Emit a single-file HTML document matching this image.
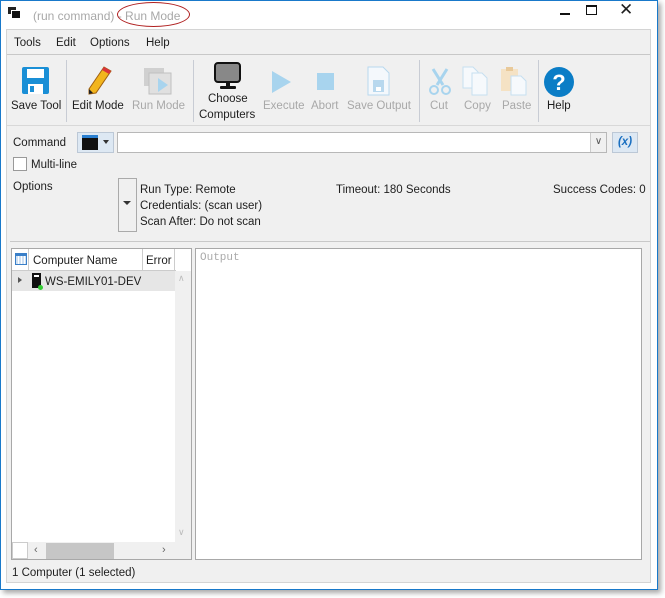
<!DOCTYPE html>
<html><head><style>
*{margin:0;padding:0;box-sizing:border-box}
body{width:665px;height:598px;background:#fff;font-family:"Liberation Sans",sans-serif;font-size:11.5px;color:#1e1e1e;position:relative;overflow:hidden}
.a{position:absolute}
.win{left:0;top:0;width:658px;height:590px;border:1px solid #1979ca;background:#fff;box-shadow:3px 3px 5px rgba(0,0,0,.35)}
.gray{color:#a8a8a8}
.tb{top:100px;font-size:11.5px;white-space:nowrap}
.sep{width:1px;background:#c8ccd4;top:60px;height:62px}
</style></head><body>
<div class="a win"></div>
<div class="a" style="left:8px;top:7px;width:8px;height:7px;background:#222"></div>
<div class="a" style="left:11px;top:10px;width:10px;height:9px;background:#111;border:1px solid #fff"></div>
<div class="a gray" style="left:33px;top:9px;font-size:12px">(run command) - Run Mode</div>
<div class="a" style="left:117px;top:2px;width:73px;height:25px;border:1.5px solid #b02020;border-radius:50%"></div>
<div class="a" style="left:560px;top:13px;width:10px;height:2px;background:#111"></div>
<div class="a" style="left:586px;top:5px;width:11px;height:10px;border:1px solid #111;border-top-width:2px"></div>
<div class="a" style="left:619px;top:0px;font-size:17px">✕</div>
<div class="a" style="left:6px;top:29px;width:645px;height:554px;background:#f0f0f0;border:1px solid #d4d4d4"></div>
<div class="a" style="left:14px;top:37px">Tools</div>
<div class="a" style="left:56px;top:37px">Edit</div>
<div class="a" style="left:90px;top:37px">Options</div>
<div class="a" style="left:146px;top:37px">Help</div>
<div class="a" style="left:7px;top:54px;width:643px;height:1px;background:#c8c8c8"></div>
<svg class="a" style="left:22px;top:67px" width="28" height="28"><rect x="0" y="0" width="27" height="27" rx="2" fill="#1a8fd6"/><rect x="5" y="2" width="17" height="9" fill="#fff"/><rect x="6" y="17" width="15" height="10" fill="#fff"/><rect x="8" y="19" width="4" height="6" fill="#1a8fd6"/></svg>
<div class="a tb" style="left:11px">Save Tool</div>
<div class="a sep" style="left:66px"></div>
<svg class="a" style="left:86px;top:65px" width="28" height="32"><polygon points="18,2 25,6 10,28 3,29 3,24" fill="#f2b51d" stroke="#a06010"/><polygon points="18,2 25,6 23,9 16,5" fill="#d9343a"/><polygon points="3,24 3,29 7,28" fill="#222"/></svg>
<div class="a tb" style="left:72px">Edit Mode</div>
<svg class="a" style="left:144px;top:68px" width="30" height="28"><rect x="0" y="0" width="20" height="18" fill="#d0d0d0"/><rect x="5" y="5" width="22" height="21" fill="#e0e0e0" stroke="#c0c0c0"/><polygon points="14,10 24,17 14,24" fill="#a8d4ee"/></svg>
<div class="a tb gray" style="left:132px">Run Mode</div>
<div class="a sep" style="left:193px"></div>
<svg class="a" style="left:214px;top:62px" width="28" height="28"><rect x="1" y="1" width="25" height="19" rx="3" fill="#888" stroke="#111" stroke-width="2"/><rect x="12" y="20" width="4" height="4" fill="#111"/><rect x="6" y="24" width="16" height="3" rx="1" fill="#111"/></svg>
<div class="a" style="left:208px;top:93px">Choose</div>
<div class="a" style="left:199px;top:109px">Computers</div>
<svg class="a" style="left:272px;top:71px" width="20" height="22"><polygon points="0,0 19,11 0,22" fill="#a8d4ee"/></svg>
<div class="a tb gray" style="left:263px">Execute</div>
<div class="a" style="left:317px;top:73px;width:17px;height:17px;background:#a8d4ee"></div>
<div class="a tb gray" style="left:311px">Abort</div>
<svg class="a" style="left:367px;top:66px" width="24" height="30"><path d="M1 1H16L22 7V29H1Z" fill="#f4f8fc" stroke="#b8d8ee"/><rect x="6" y="14" width="11" height="12" fill="#b8d8ee"/><rect x="9" y="21" width="5" height="4" fill="#fff"/></svg>
<div class="a tb gray" style="left:347px">Save Output</div>
<div class="a sep" style="left:419px"></div>
<svg class="a" style="left:428px;top:68px" width="24" height="28"><path d="M5 1L15 17M19 1L9 17" stroke="#a8d4ee" stroke-width="3"/><circle cx="6" cy="22" r="4" fill="none" stroke="#a8d4ee" stroke-width="2"/><circle cx="18" cy="22" r="4" fill="none" stroke="#a8d4ee" stroke-width="2"/></svg>
<div class="a tb gray" style="left:430px">Cut</div>
<svg class="a" style="left:462px;top:66px" width="30" height="30"><path d="M1 1H11L16 6V22H1Z" fill="#f6f9fc" stroke="#c6dff0"/><path d="M10 7H20L25 12V29H10Z" fill="#f6f9fc" stroke="#c6dff0"/></svg>
<div class="a tb gray" style="left:464px">Copy</div>
<svg class="a" style="left:500px;top:66px" width="30" height="30"><rect x="1" y="3" width="17" height="22" fill="#f5e2c4"/><rect x="6" y="1" width="7" height="4" fill="#e8c99a"/><path d="M11 10H21L26 15V29H11Z" fill="#f6f9fc" stroke="#c6dff0"/></svg>
<div class="a tb gray" style="left:502px">Paste</div>
<div class="a sep" style="left:538px"></div>
<svg class="a" style="left:543px;top:66px" width="32" height="32"><circle cx="16" cy="16" r="15" fill="#0b7dc6"/><text x="16" y="24" text-anchor="middle" font-family="Liberation Sans" font-weight="bold" font-size="22" fill="#fff">?</text></svg>
<div class="a tb" style="left:547px">Help</div>
<div class="a" style="left:7px;top:125px;width:643px;height:1px;background:#d8d8d8"></div>
<div class="a" style="left:13px;top:137px">Command</div>
<div class="a" style="left:77px;top:132px;width:37px;height:21px;background:#dde8f3;border:1px solid #bcc8d6"></div>
<div class="a" style="left:82px;top:135px;width:16px;height:15px;background:#111;border-top:3px solid #2a7fd0"></div>
<div class="a" style="left:103px;top:140px;border:3px solid transparent;border-top:4px solid #333"></div>
<div class="a" style="left:117px;top:132px;width:490px;height:21px;background:#fff;border:1px solid #b8b8b8"></div>
<div class="a" style="left:590px;top:133px;width:16px;height:19px;background:#f0f0f0;border-left:1px solid #ccc;font-size:10px;color:#555;text-align:center;line-height:18px">∨</div>
<div class="a" style="left:612px;top:132px;width:26px;height:21px;background:#dde8f3;border:1px solid #bcc8d6;color:#1a6fc0;font-weight:bold;font-style:italic;text-align:center;line-height:19px">(x)</div>
<div class="a" style="left:13px;top:157px;width:14px;height:14px;background:#fff;border:1px solid #999"></div>
<div class="a" style="left:31px;top:159px">Multi-line</div>
<div class="a" style="left:13px;top:181px">Options</div>
<div class="a" style="left:118px;top:178px;width:19px;height:54px;border:1px solid #aaa;background:#f0f0f0"></div>
<div class="a" style="left:123px;top:201px;border:4px solid transparent;border-top:4px solid #333"></div>
<div class="a" style="left:140px;top:184px">Run Type: Remote</div>
<div class="a" style="left:140px;top:200px">Credentials: (scan user)</div>
<div class="a" style="left:140px;top:216px">Scan After: Do not scan</div>
<div class="a" style="left:336px;top:184px">Timeout: 180 Seconds</div>
<div class="a" style="left:553px;top:184px">Success Codes: 0</div>
<div class="a" style="left:10px;top:241px;width:640px;height:1px;background:#c8c8c8"></div>
<div class="a" style="left:11px;top:248px;width:181px;height:312px;background:#fff;border:1px solid #a8a8a8"></div>
<div class="a" style="left:12px;top:249px;width:164px;height:22px;background:#fff;border-bottom:1px solid #ccc"></div>
<div class="a" style="left:12px;top:249px;width:17px;height:22px;border-right:1px solid #ccc"></div>
<div class="a" style="left:15px;top:253px;width:12px;height:12px;border:1px solid #3a7fc8;background:repeating-linear-gradient(90deg,#cfe0f2 0 2px,#fff 2px 3px);border-top:3px solid #3a7fc8"></div>
<div class="a" style="left:33px;top:255px">Computer Name</div>
<div class="a" style="left:142px;top:249px;width:1px;height:22px;background:#ccc"></div>
<div class="a" style="left:146px;top:255px">Error</div>
<div class="a" style="left:174px;top:249px;width:1px;height:22px;background:#ccc"></div>
<div class="a" style="left:12px;top:271px;width:164px;height:20px;background:#e6e6e6"></div>
<div class="a" style="left:18px;top:277px;border:3px solid transparent;border-left:4px solid #555"></div>
<div class="a" style="left:32px;top:273px;width:9px;height:15px;background:#111"></div>
<div class="a" style="left:34px;top:275px;width:5px;height:2px;background:#fff"></div>
<div class="a" style="left:38px;top:285px;width:5px;height:5px;border-radius:50%;background:#3c3"></div>
<div class="a" style="left:45px;top:276px">WS-EMILY01-DEV</div>
<div class="a" style="left:175px;top:271px;width:16px;height:271px;background:#f0f0f0"></div>
<div class="a" style="left:178px;top:273px;font-size:9px;color:#bbb">∧</div>
<div class="a" style="left:178px;top:527px;font-size:9px;color:#bbb">∨</div>
<div class="a" style="left:12px;top:542px;width:179px;height:17px;background:#f0f0f0"></div>
<div class="a" style="left:12px;top:542px;width:16px;height:17px;background:#fff;border:1px solid #ccc"></div>
<div class="a" style="left:46px;top:543px;width:68px;height:16px;background:#c6c6c6"></div>
<div class="a" style="left:34px;top:544px;font-size:11px;color:#666">‹</div>
<div class="a" style="left:162px;top:544px;font-size:11px;color:#666">›</div>
<div class="a" style="left:195px;top:248px;width:447px;height:312px;background:#fff;border:1px solid #a8a8a8"></div>
<div class="a" style="left:200px;top:252px;font-family:'Liberation Mono',monospace;font-size:11px;color:#aaa">Output</div>
<div class="a" style="left:12px;top:567px">1 Computer (1 selected)</div>
</body></html>
